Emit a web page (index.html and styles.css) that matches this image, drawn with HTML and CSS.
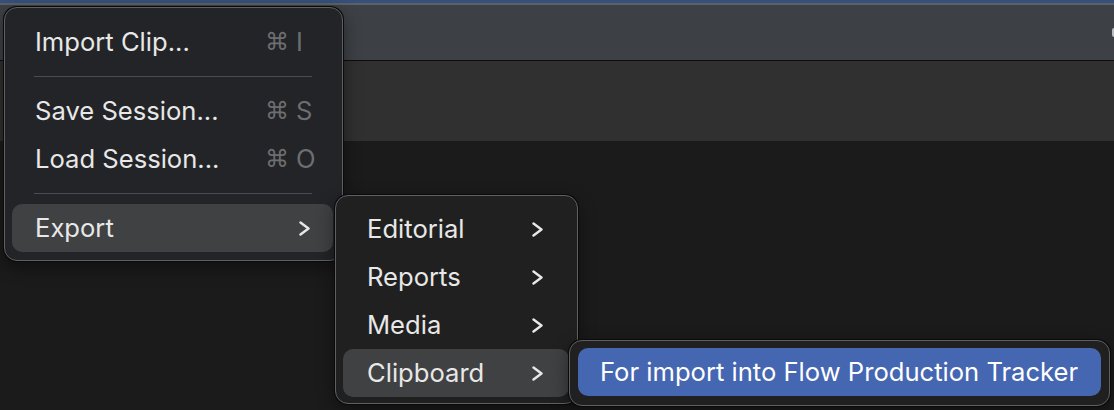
FILE: index.html
```html
<!DOCTYPE html>
<html lang="en">
<head>
    <meta charset="UTF-8">
    <title>Session Menu</title>
    <link rel="stylesheet" href="styles.css">
</head>
<body class="body">
    <div class="app">
        <div class="titlebar"></div>
        <div class="header">
            <div class="header-knob"></div>
        </div>
        <div class="toolbar"></div>
        <div class="viewer"></div>
    </div>

    <!-- File menu -->
    <div class="menu menu-main">
        <div class="item">
            <span class="label">Import Clip...</span>
            <span class="shortcut"><span class="cmd">&#8984;</span>I</span>
        </div>
        <div class="sep"></div>
        <div class="item">
            <span class="label">Save Session...</span>
            <span class="shortcut"><span class="cmd">&#8984;</span>S</span>
        </div>
        <div class="item">
            <span class="label">Load Session...</span>
            <span class="shortcut"><span class="cmd">&#8984;</span>O</span>
        </div>
        <div class="sep"></div>
        <div class="item item-open">
            <span class="label">Export</span>
            <svg class="chevron" viewBox="0 0 13 15"><path d="M2.5 1.5 L10.5 7.5 L2.5 13.5"/></svg>
        </div>
    </div>

    <!-- Export submenu -->
    <div class="menu menu-export">
        <div class="item item-sub">
            <span class="label">Editorial</span>
            <svg class="chevron" viewBox="0 0 13 15"><path d="M2.5 1.5 L10.5 7.5 L2.5 13.5"/></svg>
        </div>
        <div class="item item-sub">
            <span class="label">Reports</span>
            <svg class="chevron" viewBox="0 0 13 15"><path d="M2.5 1.5 L10.5 7.5 L2.5 13.5"/></svg>
        </div>
        <div class="item item-sub">
            <span class="label">Media</span>
            <svg class="chevron" viewBox="0 0 13 15"><path d="M2.5 1.5 L10.5 7.5 L2.5 13.5"/></svg>
        </div>
        <div class="item item-sub item-open">
            <span class="label">Clipboard</span>
            <svg class="chevron" viewBox="0 0 13 15"><path d="M2.5 1.5 L10.5 7.5 L2.5 13.5"/></svg>
        </div>
    </div>

    <!-- Clipboard submenu -->
    <div class="menu menu-clip">
        <div class="item item-active">
            <span class="label">For import into Flow Production Tracker</span>
        </div>
    </div>
</body>
</html>
```

FILE: styles.css
```css
.body {
    margin: 0;
    width: 1114px;
    height: 410px;
    overflow: hidden;
    background-color: #1b1b1b;
    font-family: Inter, "Liberation Sans", sans-serif;
    -webkit-font-smoothing: antialiased;
}

.app {
    display: flex;
    flex-direction: column;
    height: 410px;
}

.titlebar {
    height: 3px;
    background-color: #34507b;
    border-bottom: 2px solid #5d6166;
}

.header {
    display: flex;
    align-items: center;
    justify-content: flex-end;
    height: 55px;
    background-color: #3d4145;
    border-bottom: 1px solid #0c0c0c;
}

.header-knob {
    width: 3px;
    height: 9px;
    margin-right: -1px;
    border-radius: 2px 0 0 2px;
    background-color: #b9bcbf;
}

.toolbar {
    height: 80px;
    background-color: #303030;
}

.viewer {
    flex: 1;
    background-color: #1b1b1b;
}

/* menus float over the app */
.menu {
    position: absolute;
    box-sizing: border-box;
    display: flex;
    flex-direction: column;
    background-color: #222325;
    border: 1px solid #5e6064;
    border-radius: 13px;
    box-shadow: 0 0 0 1px #0a0a0a, 0 6px 18px rgba(0, 0, 0, 0.45);
}

.menu-main {
    left: 4px;
    top: 7px;
    width: 339px;
    height: 254px;
    padding: 10px 9px 0 7px;
    background-color: #232427;
}

.menu-export {
    left: 335px;
    top: 195px;
    width: 243px;
    height: 209px;
    padding: 9px 8px 0 7px;
    background-color: #202020;
}

.menu-clip {
    left: 569px;
    top: 340px;
    width: 541px;
    height: 66px;
    padding: 7px 8px 0 8px;
    background-color: #202020;
}

.item {
    display: flex;
    align-items: center;
    height: 48px;
    padding: 0 22px 0 23px;
    border-radius: 10px;
    color: #e8e8e8;
    font-size: 25.6px;
    line-height: 46px;
}

.item-sub {
    padding: 0 25px 0 24px;
}

.label {
    flex: 1;
    white-space: nowrap;
}

.item-open {
    background-color: #404143;
}

.item-active {
    padding: 0 22px;
    background-color: #4566b0;
    color: #ffffff;
}

.shortcut {
    display: flex;
    align-items: center;
    width: 46px;
    color: #6d6e70;
}

.cmd {
    font-family: "DejaVu Sans", sans-serif;
    font-size: 24px;
    margin-right: 7px;
}

.chevron {
    width: 13px;
    height: 15px;
    fill: none;
    stroke: #e8e8e8;
    stroke-width: 2.4;
    stroke-linecap: round;
    stroke-linejoin: round;
}

.sep {
    height: 1px;
    margin: 10px 21px 10px 22px;
    background-color: #4a4b4e;
}
```
